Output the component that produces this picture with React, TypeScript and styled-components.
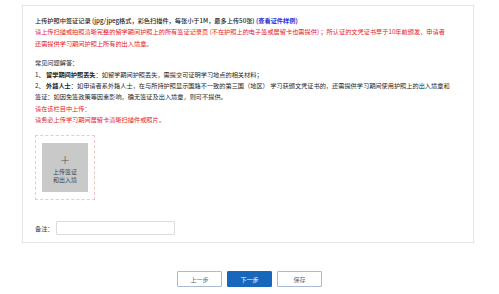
import React from "react";
import styled, { createGlobalStyle } from "styled-components";

const Global = createGlobalStyle`
  html, body { margin: 0; padding: 0; background: #ffffff; }
  body { font-family: "Noto Sans CJK SC", "Noto Sans", sans-serif; color: #333; }
  * { box-sizing: border-box; }
`;

const Page = styled.div`
  width: 499px;
  height: 294px;
  padding: 5px 25px 0 22px;
  display: flex;
  flex-direction: column;
`;

const Card = styled.section`
  border: 1px solid #e6e6e6;
  background: #fff;
  padding: 9px 12px 7px 12px;
  display: flex;
  flex-direction: column;
  height: 238px;
`;

const Para = styled.div<{ $tone?: "red" | "dark"; $weight?: number }>`
  font-size: 6.2px;
  line-height: 11.4px;
  white-space: nowrap;
  color: ${(p) => (p.$tone === "red" ? "#e2232a" : "#262626")};
  font-weight: ${(p) => p.$weight ?? 400};
`;

const Link = styled.span`
  color: #3232d2;
  font-weight: 700;
`;

const Strong = styled.b`
  font-weight: 700;
  color: #222;
`;

const Section = styled.div<{ $top: number }>`
  margin-top: ${(p) => p.$top}px;
  display: flex;
  flex-direction: column;
`;

const UploadFrame = styled.div`
  margin-top: 9px;
  width: 60px;
  height: 69px;
  border: 1px dashed #ecc9c4;
  padding: 7px 6px;
  display: flex;
`;

const UploadTile = styled.div`
  flex: 1;
  background: #c9c9c9;
  display: flex;
  flex-direction: column;
  align-items: center;
  justify-content: center;
  padding-top: 4px;
`;

const Plus = styled.div`
  font-size: 12px;
  line-height: 12px;
  color: #555;
  font-weight: 300;
  font-family: "DejaVu Sans", sans-serif;
`;

const TileLabel = styled.div`
  margin-top: 2px;
  font-size: 6px;
  line-height: 8px;
  color: #444;
  text-align: center;
`;

const RemarkRow = styled.div`
  margin-top: 21px;
  display: flex;
  align-items: center;
  gap: 2px;
`;

const RemarkLabel = styled.span`
  font-size: 6.2px;
  color: #333;
`;

const RemarkInput = styled.input`
  width: 119px;
  height: 14px;
  border: 1px solid #dcdcdc;
  border-radius: 1px;
  outline: none;
  padding: 0 3px;
  font-size: 6px;
`;

const Actions = styled.div`
  margin-top: 28px;
  display: flex;
  justify-content: center;
  gap: 5px;
  margin-left: -22px;
  margin-right: -25px;
`;

const Button = styled.button<{ $primary?: boolean }>`
  width: 45px;
  height: 16px;
  border-radius: 1px;
  border: 1px solid ${(p) => (p.$primary ? "#1767bd" : "#a9bccd")};
  background: ${(p) => (p.$primary ? "#1767bd" : "#fff")};
  color: ${(p) => (p.$primary ? "#fff" : "#4a6c8c")};
  font-family: "Noto Sans CJK SC", sans-serif;
  font-size: 6px;
  padding: 0;
  cursor: pointer;
`;

export default function App() {
  return (
    <>
      <Global />
      <Page>
        <Card>
          <Para $weight={500}>
            上传护照中签证记录 (jpg/jpeg格式，彩色扫描件，每张小于1M，最多上传50张) <Link>(查看证件样例)</Link>
          </Para>
          <Para $tone="red">
            请上传扫描或拍照清晰完整的留学期间护照上的所有签证记录页 (不在护照上的电子签或居留卡也需提供) ；所认证的文凭证书早于10年前颁发，申请者
          </Para>
          <Para $tone="red">还需提供学习期间护照上所有的出入境章。</Para>

          <Section $top={8}>
            <Para>常见问题解答：</Para>
            <Para>
              1、 <Strong>留学期间护照丢失</Strong>：如留学期间护照丢失，需提交可证明学习地点的相关材料；
            </Para>
            <Para>
              2、 <Strong>外籍人士</Strong>：如申请者系外籍人士，在与所持护照显示国籍不一致的第三国（地区） 学习获颁文凭证书的，还需提供学习期间使用护照上的出入境章和
            </Para>
            <Para>签证：如因免签政策等因素影响，确无签证及出入境章，则可不提供。</Para>
            <Para $tone="red">请在该栏目中上传：</Para>
            <Para $tone="red">请务必上传学习期间居留卡清晰扫描件或照片。</Para>
          </Section>

          <UploadFrame>
            <UploadTile>
              <Plus>+</Plus>
              <TileLabel>
                上传签证
                <br />
                和出入境
              </TileLabel>
            </UploadTile>
          </UploadFrame>

          <RemarkRow>
            <RemarkLabel>备注：</RemarkLabel>
            <RemarkInput />
          </RemarkRow>
        </Card>
        <Actions>
          <Button>上一步</Button>
          <Button $primary>下一步</Button>
          <Button>保存</Button>
        </Actions>
      </Page>
    </>
  );
}
